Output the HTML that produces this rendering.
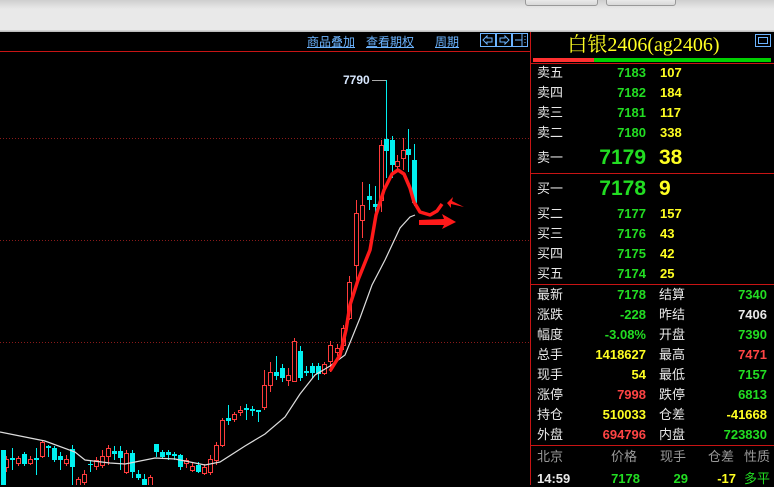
<!DOCTYPE html>
<html><head><meta charset="utf-8"><style>
*{margin:0;padding:0;box-sizing:border-box}
body{width:774px;height:485px;overflow:hidden;background:#000;position:relative;font-family:"Liberation Sans","Noto Sans CJK SC",sans-serif}
.top{position:absolute;left:0;top:0;width:774px;height:32px;background:linear-gradient(#cfcfcf 0,#e9e9e9 9px,#e9e9e9 30px,#bdbdbd 31px)}
.btn{position:absolute;top:-4px;height:10px;border:1px solid #999;border-radius:3px;background:linear-gradient(#f4f4f4,#d8d8d8)}
.t{position:absolute;white-space:nowrap;font-size:13px;line-height:16px}
.lk{color:#6cb4ff;text-decoration:underline;font-size:12px}
.w{color:#e8e8e8}.g{color:#22dd22}.y{color:#ffff22}.r{color:#ff4444}.gy{color:#9a9a9a}
.hl{position:absolute;height:1px;background:#c81414}
.num{font-family:"Liberation Sans",sans-serif;font-weight:bold;font-size:13px}
.rt{text-align:right}
</style></head><body>
<div class="top"></div>
<div class="btn" style="left:525px;width:73px"></div>
<div class="btn" style="left:606px;width:70px"></div>

<svg style="position:absolute;left:0;top:32px" width="531" height="453" viewBox="0 32 531 453">
<line x1="0" y1="51.5" x2="531" y2="51.5" stroke="#c81414"/>
<g stroke="#8a1a1a" stroke-dasharray="1,2">
<line x1="0" y1="138.5" x2="531" y2="138.5"/><line x1="0" y1="240.5" x2="531" y2="240.5"/><line x1="0" y1="342.5" x2="531" y2="342.5"/></g>
<path fill="none" stroke="#ff3c3c" d="M6.5 456V472M18.5 456V466M30.5 456V465M42.5 440V458M66.5 455V466M78.5 477V485M84.5 470V485M96.5 457V470M102.5 450V468M108.5 445V465M126.5 450V474M150.5 475V485M186.5 458V468M192.5 463V472M204.5 464V475M210.5 455V475M216.5 442V465M222.5 418V447M234.5 412V422M240.5 406V416M264.5 370V410M270.5 362V392M288.5 368V386M294.5 338V382M324.5 362V375M330.5 341V372M337.5 344V356M343.5 325V350M349.5 276V320M356.5 200V280M362.5 182V238M381.5 140V212M397.5 155V170M403.5 138V170"/>
<g fill="#000" stroke="#ff3c3c">
<rect x="4.5" y="459.5" width="4" height="8"/><rect x="16.5" y="458.5" width="4" height="5"/><rect x="28.5" y="459.5" width="4" height="4"/><rect x="40.5" y="442.5" width="4" height="14"/><rect x="64.5" y="459.5" width="4" height="4"/><rect x="76.5" y="479.5" width="4" height="6"/><rect x="82.5" y="474.5" width="4" height="8"/><rect x="94.5" y="460.5" width="4" height="6"/><rect x="100.5" y="456.5" width="4" height="9"/><rect x="106.5" y="448.5" width="4" height="8"/><rect x="124.5" y="453.5" width="4" height="19"/><rect x="148.5" y="477.5" width="4" height="8"/><rect x="184.5" y="460.5" width="4" height="3"/><rect x="190.5" y="466.5" width="4" height="4"/><rect x="202.5" y="467.5" width="4" height="6"/><rect x="208.5" y="459.5" width="4" height="13"/><rect x="214.5" y="445.5" width="4" height="15"/><rect x="220.5" y="420.5" width="4" height="25"/><rect x="232.5" y="414.5" width="4" height="5"/><rect x="238.5" y="410.5" width="4" height="2"/><rect x="262.5" y="385.5" width="4" height="22"/><rect x="268.5" y="372.5" width="4" height="13"/><rect x="286.5" y="375.5" width="4" height="5"/><rect x="292.5" y="341.5" width="4" height="40"/><rect x="322.5" y="364.5" width="4" height="9"/><rect x="328.5" y="345.5" width="4" height="16"/><rect x="335.5" y="348.5" width="4" height="4"/><rect x="341.5" y="328.5" width="4" height="17"/><rect x="347.5" y="282.5" width="4" height="36"/><rect x="354.5" y="213.5" width="4" height="52"/><rect x="360.5" y="205.5" width="4" height="15"/><rect x="379.5" y="145.5" width="4" height="55"/><rect x="395.5" y="161.5" width="4" height="5"/><rect x="401.5" y="150.5" width="4" height="8"/>
</g>
<path fill="none" stroke="#00f0f0" d="M3.5 450V485M12.5 448V470M24.5 452V466M36.5 448V475M48.5 445V457M54.5 446V462M60.5 452V470M72.5 445V485M90.5 460V472M114.5 446V460M120.5 446V470M132.5 450V478M138.5 470V480M144.5 474V485M156.5 444V457M162.5 450V459M168.5 450V460M174.5 452V460M180.5 454V470M198.5 462V473M228.5 405V425M246.5 404V420M252.5 406V416M258.5 410V422M276.5 356V380M282.5 364V382M300.5 346V381M306.5 366V376M312.5 363V378M318.5 363V380M369.5 184V210M375.5 186V222M386.5 80V178M392.5 136V178M408.5 129V172M414.5 144V206"/>
<g fill="#00f0f0">
<rect x="1" y="450" width="5" height="35"/><rect x="10" y="458" width="5" height="2"/><rect x="22" y="454" width="5" height="10"/><rect x="34" y="458" width="5" height="2"/><rect x="46" y="446" width="5" height="2"/><rect x="52" y="448" width="5" height="12"/><rect x="58" y="456" width="5" height="4"/><rect x="70" y="449" width="5" height="18"/><rect x="88" y="464" width="5" height="1"/><rect x="112" y="451" width="5" height="3"/><rect x="118" y="451" width="5" height="7"/><rect x="130" y="453" width="5" height="19"/><rect x="136" y="474" width="5" height="4"/><rect x="142" y="479" width="5" height="6"/><rect x="154" y="444" width="5" height="8"/><rect x="160" y="452" width="5" height="5"/><rect x="166" y="452" width="5" height="3"/><rect x="172" y="454" width="5" height="2"/><rect x="178" y="455" width="5" height="12"/><rect x="196" y="465" width="5" height="7"/><rect x="226" y="418" width="5" height="3"/><rect x="244" y="408" width="5" height="2"/><rect x="250" y="409" width="5" height="2"/><rect x="256" y="410" width="5" height="2"/><rect x="274" y="372" width="5" height="4"/><rect x="280" y="368" width="5" height="10"/><rect x="298" y="351" width="5" height="27"/><rect x="304" y="371" width="5" height="2"/><rect x="310" y="366" width="5" height="7"/><rect x="316" y="366" width="5" height="8"/><rect x="367" y="196" width="5" height="4"/><rect x="373" y="204" width="5" height="3"/><rect x="384" y="139" width="5" height="12"/><rect x="390" y="140" width="5" height="25"/><rect x="406" y="149" width="5" height="6"/><rect x="412" y="160" width="5" height="43"/>
</g>
<polyline fill="none" stroke="#dddddd" stroke-width="1.2" points="0,432 45,441 75,452 85,460 110,463 125,464 155,458 175,459 205,465 220,462 245,446 265,434 285,417 300,394 315,375 330,366 345,355 360,318 372,285 385,260 400,228 410,217 415,215"/>
<polyline fill="none" stroke="#ff1a1a" stroke-width="3.5" stroke-linejoin="round" points="330,371 340,355 346,330 350,305 358,280 370,250 376,215 384,190 392,174 398,170 404,174 410,188 414,202 420,212 430,215 437,211 442,204"/>
<polygon fill="#ff1a1a" points="419,220 444,219 442,214 456,222 442,229 444,225 419,225"/>
<polygon fill="#ff1a1a" points="447,203 453,197 452,201 464,207 451,204 451,208"/>
<text x="343" y="84" fill="#d8e8ff" font-size="12" font-weight="bold" font-family="Liberation Sans">7790</text>
<line x1="372" y1="80.5" x2="386" y2="80.5" stroke="#aaa"/>
</svg>

<div class="t lk" style="left:307px;top:34px">商品叠加</div>
<div class="t lk" style="left:366px;top:34px">查看期权</div>
<div class="t lk" style="left:435px;top:34px">周期</div>
<svg style="position:absolute;left:480px;top:33px" width="50" height="15">
<g fill="none" stroke="#6cb4ff"><rect x="0.5" y="0.5" width="15" height="13"/><rect x="16.5" y="0.5" width="15" height="13"/><rect x="32.5" y="0.5" width="15" height="13"/>
<path d="M3 7 L7 3 L7 5 L12 5 L12 9 L7 9 L7 11 Z"/><path d="M29 7 L25 3 L25 5 L20 5 L20 9 L25 9 L25 11 Z"/><path d="M35 7 L42 7 M42 1 L42 13 M45 3 L45 4 M45 6 L45 7 M45 9 L45 10"/></g></svg>

<div style="position:absolute;left:530px;top:32px;width:1px;height:453px;background:#c81414"></div>
<div class="t y" style="left:531px;top:33px;width:225px;text-align:center;font-family:'Liberation Serif','Noto Serif CJK SC',serif;font-size:20px;line-height:24px">白银2406(ag2406)</div>
<svg style="position:absolute;left:755px;top:34px" width="17" height="14"><rect x="0.5" y="0.5" width="15" height="12" fill="none" stroke="#6cb4ff"/><rect x="3.5" y="3.5" width="9" height="6" fill="none" stroke="#6cb4ff"/></svg>
<div style="position:absolute;left:533px;top:58px;width:61px;height:4px;background:#ff3030"></div>
<div style="position:absolute;left:594px;top:58px;width:177px;height:4px;background:#00d000"></div>
<div class="hl" style="left:531px;top:63px;width:243px"></div>

<div class="t w" style="left:537px;top:65px">卖五</div><div class="t num g rt" style="left:580px;top:65px;width:66px">7183</div><div class="t num y" style="left:660px;top:65px">107</div>
<div class="t w" style="left:537px;top:85px">卖四</div><div class="t num g rt" style="left:580px;top:85px;width:66px">7182</div><div class="t num y" style="left:660px;top:85px">184</div>
<div class="t w" style="left:537px;top:105px">卖三</div><div class="t num g rt" style="left:580px;top:105px;width:66px">7181</div><div class="t num y" style="left:660px;top:105px">117</div>
<div class="t w" style="left:537px;top:125px">卖二</div><div class="t num g rt" style="left:580px;top:125px;width:66px">7180</div><div class="t num y" style="left:660px;top:125px">338</div>
<div class="t w" style="left:537px;top:150px">卖一</div><div class="t num g rt" style="left:570px;top:145px;width:76px;font-size:21px;line-height:26px">7179</div><div class="t num y" style="left:659px;top:145px;font-size:21px;line-height:26px">38</div>
<div class="hl" style="left:531px;top:173px;width:243px"></div>
<div class="t w" style="left:537px;top:181px">买一</div><div class="t num g rt" style="left:570px;top:176px;width:76px;font-size:21px;line-height:26px">7178</div><div class="t num y" style="left:659px;top:176px;font-size:21px;line-height:26px">9</div>
<div class="t w" style="left:537px;top:206px">买二</div><div class="t num g rt" style="left:580px;top:206px;width:66px">7177</div><div class="t num y" style="left:660px;top:206px">157</div>
<div class="t w" style="left:537px;top:226px">买三</div><div class="t num g rt" style="left:580px;top:226px;width:66px">7176</div><div class="t num y" style="left:660px;top:226px">43</div>
<div class="t w" style="left:537px;top:246px">买四</div><div class="t num g rt" style="left:580px;top:246px;width:66px">7175</div><div class="t num y" style="left:660px;top:246px">42</div>
<div class="t w" style="left:537px;top:266px">买五</div><div class="t num g rt" style="left:580px;top:266px;width:66px">7174</div><div class="t num y" style="left:660px;top:266px">25</div>
<div class="hl" style="left:531px;top:284px;width:243px"></div>

<div style="position:absolute;left:531px;top:287px;width:243px">
<div class="t w" style="left:6px;top:0">最新</div><div class="t num g rt" style="left:50px;top:0;width:65px">7178</div><div class="t w" style="left:128px;top:0">结算</div><div class="t num g rt" style="left:160px;top:0;width:76px">7340</div>
<div class="t w" style="left:6px;top:20px">涨跌</div><div class="t num g rt" style="left:50px;top:20px;width:65px">-228</div><div class="t w" style="left:128px;top:20px">昨结</div><div class="t num w rt" style="left:160px;top:20px;width:76px">7406</div>
<div class="t w" style="left:6px;top:40px">幅度</div><div class="t num g rt" style="left:50px;top:40px;width:65px">-3.08%</div><div class="t w" style="left:128px;top:40px">开盘</div><div class="t num g rt" style="left:160px;top:40px;width:76px">7390</div>
<div class="t w" style="left:6px;top:60px">总手</div><div class="t num y rt" style="left:50px;top:60px;width:65px">1418627</div><div class="t w" style="left:128px;top:60px">最高</div><div class="t num r rt" style="left:160px;top:60px;width:76px">7471</div>
<div class="t w" style="left:6px;top:80px">现手</div><div class="t num y rt" style="left:50px;top:80px;width:65px">54</div><div class="t w" style="left:128px;top:80px">最低</div><div class="t num g rt" style="left:160px;top:80px;width:76px">7157</div>
<div class="t w" style="left:6px;top:100px">涨停</div><div class="t num r rt" style="left:50px;top:100px;width:65px">7998</div><div class="t w" style="left:128px;top:100px">跌停</div><div class="t num g rt" style="left:160px;top:100px;width:76px">6813</div>
<div class="t w" style="left:6px;top:120px">持仓</div><div class="t num y rt" style="left:50px;top:120px;width:65px">510033</div><div class="t w" style="left:128px;top:120px">仓差</div><div class="t num y rt" style="left:160px;top:120px;width:76px">-41668</div>
<div class="t w" style="left:6px;top:140px">外盘</div><div class="t num r rt" style="left:50px;top:140px;width:65px">694796</div><div class="t w" style="left:128px;top:140px">内盘</div><div class="t num g rt" style="left:160px;top:140px;width:76px">723830</div>
</div>
<div class="hl" style="left:531px;top:445px;width:243px"></div>
<div class="t gy" style="left:537px;top:449px">北京</div><div class="t gy" style="left:611px;top:449px">价格</div><div class="t gy" style="left:660px;top:449px">现手</div><div class="t gy" style="left:708px;top:449px">仓差</div><div class="t gy" style="left:744px;top:449px">性质</div>
<div class="t num w" style="left:537px;top:471px">14:59</div><div class="t num g rt" style="left:600px;top:471px;width:40px">7178</div><div class="t num g rt" style="left:650px;top:471px;width:38px">29</div><div class="t num y rt" style="left:700px;top:471px;width:36px">-17</div><div class="t g" style="left:744px;top:471px">多平</div>
</body></html>
